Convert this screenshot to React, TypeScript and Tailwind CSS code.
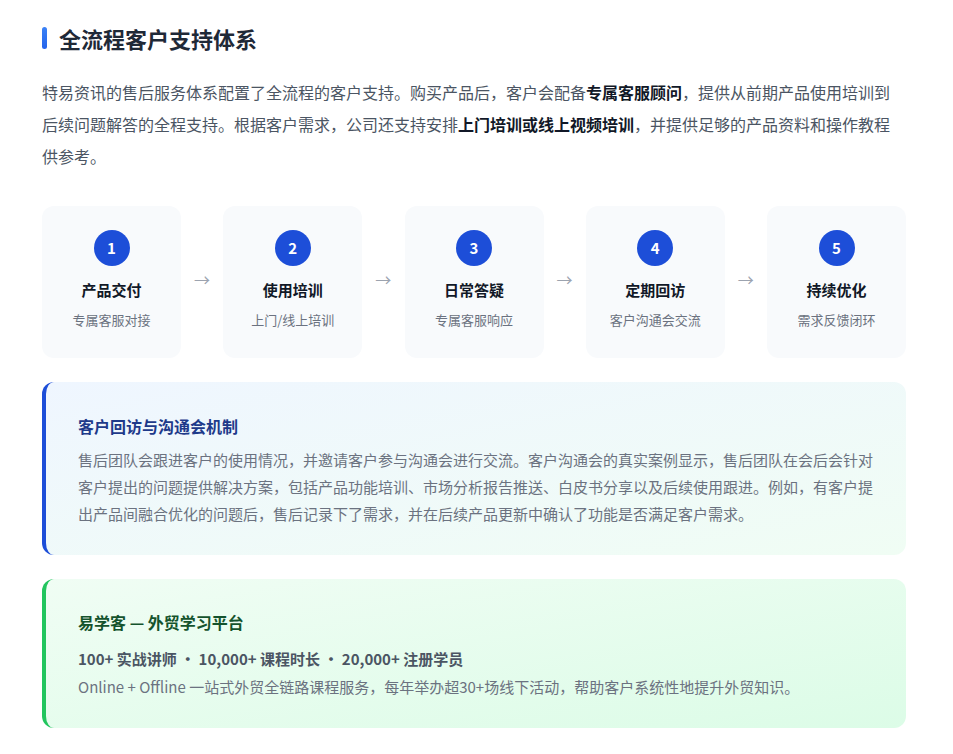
import React from "react";

const steps = [
  ["1", "产品交付", "专属客服对接"],
  ["2", "使用培训", "上门/线上培训"],
  ["3", "日常答疑", "专属客服响应"],
  ["4", "定期回访", "客户沟通会交流"],
  ["5", "持续优化", "需求反馈闭环"],
];

export default function App() {
  return (
    <div className="bg-white w-[953px] min-h-[754px] pl-[42px] pr-[47px] pt-[24px] pb-[28px]" style={{ fontFamily: '"Noto Sans CJK SC", "Noto Sans", sans-serif' }}>
      <div className="flex items-center gap-[12px] h-[28px]">
        <div className="w-[5px] h-[22px] rounded-full bg-gradient-to-b from-[#3b82f6] to-[#2563eb]" />
        <h1 className="text-[22px] font-bold text-[#1f2937] leading-[28px]">全流程客户支持体系</h1>
      </div>
      <p className="mt-[24px] text-[16px] leading-[32px] text-[#4b5563]">
        特易资讯的售后服务体系配置了全流程的客户支持。购买产品后，客户会配备<b className="text-[#111827] font-bold">专属客服顾问</b>，提供从前期产品使用培训到后续问题解答的全程支持。根据客户需求，公司还支持安排<b className="text-[#111827] font-bold">上门培训或线上视频培训</b>，并提供足够的产品资料和操作教程供参考。
      </p>
      <div className="mt-[34px] flex items-center">
        {steps.map((s, i) => (
          <React.Fragment key={s[0]}>
            {i > 0 && <div className="flex-1 text-center text-[#9ca3af] text-[16px] -mt-[6px]">→</div>}
            <div className="w-[139px] h-[152px] rounded-[12px] bg-[#f8fafc] flex flex-col items-center pt-[24px]">
              <div className="w-[36px] h-[36px] rounded-full bg-[#1d4ed8] text-white flex items-center justify-center text-[15px] font-bold">{s[0]}</div>
              <div className="mt-[14px] text-[15px] font-bold text-[#111827] leading-[20px]">{s[1]}</div>
              <div className="mt-[10px] text-[13px] text-[#6b7280] leading-[20px]">{s[2]}</div>
            </div>
          </React.Fragment>
        ))}
      </div>
      <div className="mt-[24px] rounded-[12px] border-l-[4px] border-[#1d4ed8] bg-gradient-to-br from-[#eff6ff] to-[#f0fdf4] pl-[32px] pr-[28px] pt-[32px] pb-[28px]">
        <div className="text-[16px] font-bold text-[#1e3a8a] leading-[24px]">客户回访与沟通会机制</div>
        <p className="mt-[8px] text-[15px] leading-[27px] text-[#6b7280]">
          售后团队会跟进客户的使用情况，并邀请客户参与沟通会进行交流。客户沟通会的真实案例显示，售后团队在会后会针对客户提出的问题提供解决方案，包括产品功能培训、市场分析报告推送、白皮书分享以及后续使用跟进。例如，有客户提出产品间融合优化的问题后，售后记录下了需求，并在后续产品更新中确认了功能是否满足客户需求。
        </p>
      </div>
      <div className="mt-[24px] rounded-[12px] border-l-[4px] border-[#22c55e] bg-gradient-to-br from-[#f0fdf4] to-[#dcfce7] pl-[32px] pr-[28px] pt-[31px] pb-[29px]">
        <div className="text-[16px] font-bold text-[#14532d] leading-[24px]">易学客 — 外贸学习平台</div>
        <div className="mt-[13px] text-[15px] font-bold text-[#4b5563] leading-[24px]">100+ 实战讲师 · 10,000+ 课程时长 · 20,000+ 注册学员</div>
        <div className="mt-[4px] text-[15px] text-[#6b7280] leading-[24px]">Online + Offline 一站式外贸全链路课程服务，每年举办超30+场线下活动，帮助客户系统性地提升外贸知识。</div>
      </div>
    </div>
  );
}
